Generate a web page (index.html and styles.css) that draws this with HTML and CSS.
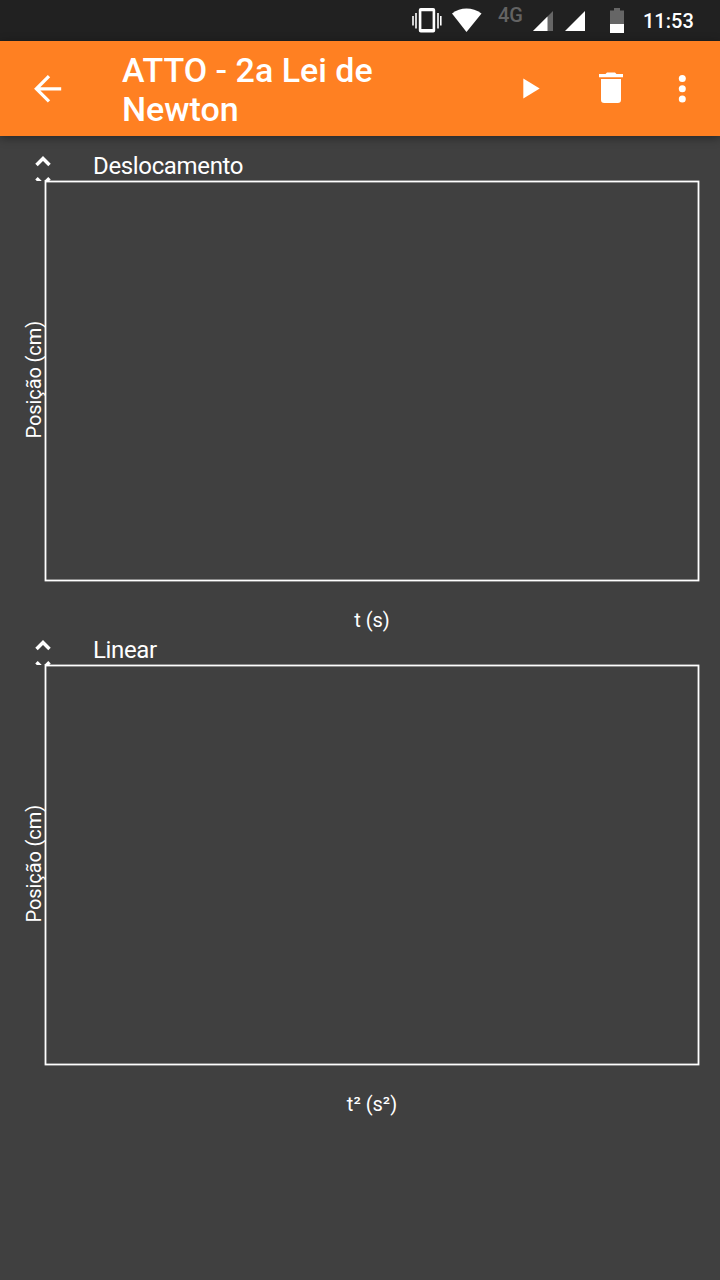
FILE: index.html
```html
<!DOCTYPE html>
<html lang="pt-BR">
<head>
<meta charset="utf-8">
<title>ATTO - 2a Lei de Newton</title>
<link rel="stylesheet" href="styles.css">
</head>
<body>
<div class="status-bar">
  <svg class="vibrate" width="30" height="24" viewBox="0 0 30 24"><path fill="#fff" fill-rule="evenodd" d="M8.800 0h12.400q2 0 2 2v20.400q0 2-2 2H8.800q-2 0-2-2V2q0-2 2-2zM9.400 3.200v17.800h11.200V3.200z"/><path stroke="#fff" stroke-width="1.600" d="M1 8v9.500M4 5v15.500M26 5v15.500M28.800 8v9.500"/></svg>
  <svg class="wifi" width="30" height="24" viewBox="0 0 30 24"><path fill="#fff" d="M0 5.600Q6.500.6 14.500.6t15 5L14.500 24z"/></svg>
  <span class="network">4G</span>
  <svg class="signal-one" width="20" height="20" viewBox="0 0 20 20"><path fill="#666" d="M0 20L20 0v20z"/><path fill="#fff" d="M0 20L14.500 5.500V20z"/></svg>
  <svg class="signal-two" width="20" height="20" viewBox="0 0 20 20"><path fill="#fff" d="M0 20L20 0v20z"/></svg>
  <svg class="battery" width="14" height="25" viewBox="0 0 14 25"><path fill="#666" d="M4 0h6v2.500h4V16H0V2.500h4z"/><path fill="#fff" d="M0 16h14v9H0z"/></svg>
  <span class="clock">11:53</span>
</div>
<header class="app-bar">
  <svg class="back" width="28" height="28" viewBox="0 0 28 28"><path fill="none" stroke="#fff" stroke-width="3.300" d="M15 1.200L2.400 13.800 15 26.400M2.400 13.800H27.200"/></svg>
  <h1 class="title">ATTO - 2a Lei de<br>Newton</h1>
  <svg class="play" width="18" height="22" viewBox="0 0 18 22"><path fill="#fff" d="M.3.500v20L16.700 10.500z"/></svg>
  <svg class="trash" width="24" height="31" viewBox="0 0 24 31"><path fill="#fff" d="M0 2h6.500L8 .4h8L17.500 2H24v3.200H0zM2 7h20v20.700q0 3.200-3.200 3.200H5.200Q2 30.900 2 27.700z"/></svg>
  <svg class="more" width="8" height="28" viewBox="0 0 8 28"><g fill="#fff"><circle cx="4.300" cy="3.500" r="3.500"/><circle cx="4.300" cy="13.700" r="3.500"/><circle cx="4.300" cy="23.900" r="3.500"/></g></svg>
</header>
<main class="plots">
  <section class="plot">
    <div class="plot-header">
      <svg class="toggle" width="16" height="26" viewBox="0 0 16 26"><path fill="none" stroke="#fff" stroke-width="3.500" d="M1.500 10L8 3.500l6.500 6.500M1.500 23.200L8 29.700l6.500-6.500"/></svg>
      <h2 class="plot-title">Deslocamento</h2>
    </div>
    <div class="plot-body">
      <div class="y-axis"><span class="y-label">Posição (cm)</span></div>
      <svg class="frame" width="656" height="402" viewBox="0 0 656 402"><rect x="1.500" y="1.500" width="653" height="399" fill="none" stroke="#fff" stroke-width="1.800"/></svg>
    </div>
    <div class="x-label">t (s)</div>
  </section>
  <section class="plot">
    <div class="plot-header">
      <svg class="toggle" width="16" height="26" viewBox="0 0 16 26"><path fill="none" stroke="#fff" stroke-width="3.500" d="M1.500 10L8 3.500l6.500 6.500M1.500 23.200L8 29.700l6.500-6.500"/></svg>
      <h2 class="plot-title">Linear</h2>
    </div>
    <div class="plot-body">
      <div class="y-axis"><span class="y-label">Posição (cm)</span></div>
      <svg class="frame" width="656" height="402" viewBox="0 0 656 402"><rect x="1.500" y="1.500" width="653" height="399" fill="none" stroke="#fff" stroke-width="1.800"/></svg>
    </div>
    <div class="x-label">t² (s²)</div>
  </section>
</main>
</body>
</html>
```
FILE: styles.css
```css
* {
  box-sizing: border-box;
}

body {
  margin: 0;
  height: 1280px;
  background: #404040;
  color: #fff;
  font-family: Roboto, "Noto Sans", sans-serif;
  overflow: hidden;
}

svg {
  display: block;
  flex: none;
}

.status-bar {
  display: flex;
  align-items: flex-start;
  height: 41px;
  padding: 8px 0 0 412px;
  background: #212121;
}

.vibrate {
  overflow: visible;
}

.wifi {
  margin-left: 10px;
}

.network {
  width: 34px;
  padding-left: 16px;
  box-sizing: content-box;
  font-size: 20px;
  font-weight: 500;
  line-height: 14px;
  color: #636363;
}

.signal-one {
  margin: 3px 0 0 1px;
}

.signal-two {
  margin: 3px 0 0 12px;
}

.battery {
  margin-left: 25px;
}

.clock {
  margin-left: 19px;
  font-size: 20px;
  font-weight: 500;
  line-height: 26px;
}

.app-bar {
  display: flex;
  align-items: center;
  height: 95px;
  padding-left: 34px;
  background: #ff8022;
  box-shadow: 0 2px 9px rgba(0, 0, 0, 0.4);
}

.title {
  width: 401px;
  margin: 3px 0 0 60px;
  font-size: 34px;
  font-weight: 500;
  line-height: 39px;
}

.trash {
  margin: 0 0 2px 58px;
}

.more {
  margin-left: 55px;
}

.plots {
  padding-top: 12px;
}

.plot {
  height: 484px;
}

.plot-header {
  display: flex;
  height: 32px;
  padding-left: 35px;
}

.toggle {
  margin-top: 7px;
}

.plot-title {
  margin: 0 0 0 42px;
  font-size: 24px;
  font-weight: 400;
  line-height: 36px;
  letter-spacing: -0.35px;
}

.plot-body {
  display: flex;
  height: 402px;
}

.y-axis {
  display: flex;
  align-items: center;
  justify-content: flex-end;
  width: 44px;
}

.y-label {
  margin: 0 -2px 2px 0;
  font-size: 20px;
  line-height: 24px;
  letter-spacing: -0.1px;
  white-space: nowrap;
  writing-mode: vertical-rl;
  transform: rotate(180deg);
}

.x-label {
  padding: 26px 0 0 44px;
  width: 700px;
  font-size: 20px;
  line-height: 24px;
  text-align: center;
}
```
